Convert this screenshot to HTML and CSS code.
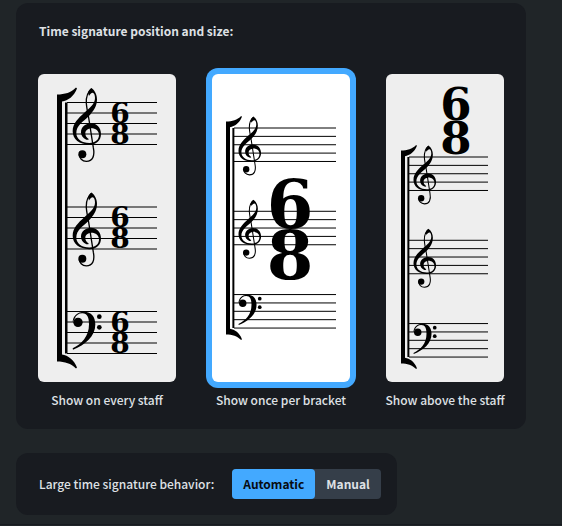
FILE: index.html
```html
<!DOCTYPE html>
<html lang="en">
<head>
  <meta charset="UTF-8">
  <meta name="viewport" content="width=device-width, initial-scale=1.0">
  <title>Time Signatures</title>
  <link rel="stylesheet" href="styles.css">
</head>
<body>

  <!-- Shared music symbols -->
  <svg class="symbols" width="0" height="0" aria-hidden="true">
    <defs>
      <g id="treble">
        <path d="M184 66C196 74 201 88 201 100C201 122 190 136 177 150C158 168 139 179 139 201C139 219 155 231 178 231C197 231 207 220 207 207C207 195 197 187 184 187C174 188 166 193 166 202C166 210 169 214 176 219C176 222 172 222 169 221C158 216 153 209 153 199C153 183 167 172 183 172C200 172 213 185 213 204C213 224 199 236 178 236C148 236 128 220 128 196C128 172 146 156 162 141C178 127 195 114 195 96C195 87 192 80 188 80C184 80 180 84 177 90L174 80C177 73 180 69 184 66Z"/>
        <path class="stroke" d="M185 69C175 76 168 92 169 112C170 125 173 140 176 155L190 245C195 270 188 286 169 286C156 286 148 276 148 266"/>
        <circle cx="157" cy="265" r="12"/>
      </g>
      <g id="bass">
        <path d="M128 97C128 78 143 65 162 65C184 65 196 80 196 103C196 140 165 165 129 179L128 175C155 162 177 140 177 103C177 82 172 70 157 70C146 70 138 76 134 86Z"/>
        <circle cx="144" cy="97" r="14"/>
        <circle cx="208" cy="80" r="7"/>
        <circle cx="208" cy="112" r="7"/>
      </g>
      <g id="system">
        <path d="M0 -8C8 -8 14 -10 19 -15L20 -14C17 -6 11 -2 5 -1V252C11 253 17 257 20 265L19 266C14 261 8 259 0 259Z"/>
        <path d="M8 0H10.500V251H8Z"/>
        <use href="#treble" transform="translate(-27 -36.500) scale(.3333)"/>
        <use href="#treble" transform="translate(-27 68) scale(.3333)"/>
        <use href="#bass" transform="translate(-27 187.500) scale(.3333)"/>
      </g>
      <path id="staves" d="M0 0H1M0 10.500H1M0 21H1M0 31.500H1M0 42H1M0 104.500H1M0 115H1M0 125.500H1M0 136H1M0 146.500H1M0 209H1M0 219.500H1M0 230H1M0 240.500H1M0 251H1"/>
    </defs>
  </svg>

  <main class="page">
    <section class="panel">
      <h2 class="title">Time signature position and size:</h2>
      <div class="options">
        <button type="button" class="option" aria-pressed="false">
          <svg class="score" width="138" height="308" viewBox="0 0 138 308">
            <use href="#system" transform="translate(19 28.500)"/>
            <use href="#staves" class="staves" transform="translate(29 28.500) scale(90 1)"/>
            <g class="small">
              <text x="82" y="49">6</text><text x="82" y="70">8</text>
              <text x="82" y="153">6</text><text x="82" y="174">8</text>
              <text x="82" y="258">6</text><text x="82" y="279">8</text>
            </g>
          </svg>
          <span class="caption">Show on every staff</span>
        </button>

        <button type="button" class="option selected" aria-pressed="true">
          <svg class="score" width="138" height="308" viewBox="0 0 138 308">
            <use href="#system" transform="translate(14 54) scale(.797)"/>
            <use href="#staves" class="staves" transform="translate(22 54) scale(102 .797)"/>
            <g class="large">
              <text x="78" y="154">6</text><text x="78" y="205">8</text>
            </g>
          </svg>
          <span class="caption">Show once per bracket</span>
        </button>

        <button type="button" class="option" aria-pressed="false">
          <svg class="score" width="118" height="308" viewBox="0 0 118 308">
            <use href="#system" transform="translate(15 83) scale(.797)"/>
            <use href="#staves" class="staves" transform="translate(23 83) scale(79 .797)"/>
            <g class="medium">
              <text x="70" y="46">6</text><text x="70" y="80">8</text>
            </g>
          </svg>
          <span class="caption">Show above the staff</span>
        </button>
      </div>
    </section>

    <section class="panel behavior">
      <span id="behaviorLabel">Large time signature behavior:</span>
      <div class="toggle" role="group" aria-labelledby="behaviorLabel">
        <button type="button" class="active" aria-pressed="true">Automatic</button>
        <button type="button" aria-pressed="false">Manual</button>
      </div>
    </section>
  </main>

  <script>
    // Only one option can be active in each group
    function setupGroup(selector, className) {
      const buttons = document.querySelectorAll(selector);
      buttons.forEach(button => {
        button.onclick = () => {
          buttons.forEach(b => {
            b.classList.toggle(className, b === button);
            b.setAttribute('aria-pressed', b === button);
          });
        };
      });
    }

    setupGroup('.option', 'selected');
    setupGroup('.toggle button', 'active');
  </script>
</body>
</html>
```
FILE: styles.css
```css
* { margin: 0; padding: 0; box-sizing: border-box; }
body { font-family: "Noto Sans CJK SC", sans-serif; font-size: 12px; line-height: 20px; font-weight: 500; color: #dfe1e5; background: #202528; }
button { font: inherit; color: inherit; border: none; background: none; cursor: pointer; }
.symbols { position: absolute; }

.page { padding: 3px 16px 9px; display: flex; flex-direction: column; align-items: flex-start; gap: 24px; border-bottom: 1px solid #181b20; }
.panel { background: #181b20; border-radius: 12px; padding: 18px 22px 19px; }
.title { font-size: 12px; line-height: 20px; font-weight: 700; margin-bottom: 33px; padding-left: 1px; }

/* Score previews */
.options { display: flex; gap: 36px; }
.option { display: flex; flex-direction: column; gap: 8px; }
.score { display: block; background: #eee; border-radius: 6px; }
.option.selected .score { background: #fff; box-shadow: 0 0 0 6px #43a9ff; }
.caption { align-self: center; white-space: nowrap; margin: 0 -4px; }
.stroke { fill: none; stroke: #000; stroke-width: 4; }
.staves { fill: none; stroke: #000; stroke-width: 1; }
#staves { vector-effect: non-scaling-stroke; }

/* Time signature digits */
.score text { font-family: "DejaVu Serif", serif; font-weight: 700; text-anchor: middle; fill: #000; }
.small { font-size: 28px; }
.medium { font-size: 45px; }
.large { font-size: 67px; }

/* Automatic / Manual switch */
.behavior { display: flex; align-items: center; gap: 18px; padding: 16px 16px 16px 23px; }
.toggle { display: flex; background: #353e49; border-radius: 4px; }
.toggle button { height: 30px; padding: 0 11px; border-radius: 4px; font-weight: 700; }
.toggle .active { background: #43a9ff; color: #080c12; }
```
